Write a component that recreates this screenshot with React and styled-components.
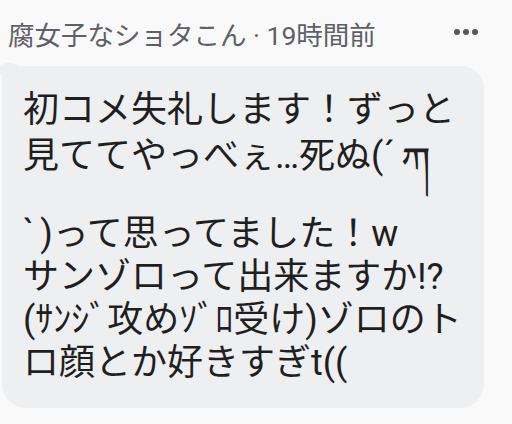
import React from "react";
import styled, { createGlobalStyle } from "styled-components";

const GlobalStyle = createGlobalStyle`
  html, body {
    margin: 0;
    padding: 0;
    background: #f9f9f9;
  }
  body {
    font-family: Roboto, "Noto Sans CJK JP", sans-serif;
  }
`;

const Page = styled.div`
  width: 512px;
  height: 424px;
  overflow: hidden;
  background: #f9f9f9;
`;

const Header = styled.div`
  display: flex;
  align-items: center;
  justify-content: space-between;
  height: 66px;
  padding: 0 34px 0 8px;
  box-sizing: border-box;
`;

const Meta = styled.div`
  font-size: 26.5px;
  color: #5e6066;
  white-space: nowrap;
`;

const MoreButton = styled.div`
  display: flex;
  gap: 3px;
  padding-bottom: 2px;
`;

const Dot = styled.span`
  width: 6px;
  height: 6px;
  border-radius: 50%;
  background: #55575d;
`;

const Bubble = styled.div`
  position: relative;
  margin-left: 2px;
  width: 482px;
  height: 342px;
  box-sizing: border-box;
  padding: 23px 10px 0 21px;
  background: #eeeff1;
  border-radius: 6px 22px 24px 24px;

  &::before {
    content: "";
    position: absolute;
    left: -4px;
    top: -3px;
    width: 22px;
    height: 12px;
    background: #eeeff1;
    border-radius: 50% 50% 0 0;
  }
`;

const Line = styled.div`
  position: relative;
  font-size: 36px;
  line-height: 43px;
  color: #1f1f21;
  white-space: nowrap;
  margin-bottom: ${(p) => (p.tall ? "35px" : "0")};
`;

const Tibetan = styled.span`
  position: relative;
  top: 9px;
  margin-left: 6px;
  font-size: 42px;
  font-family: "Noto Sans Tibetan", "DejaVu Sans", sans-serif;
`;

const Grave = styled.span`
  margin-right: 6px;
`;

export default function App() {
  return (
    <Page>
      <GlobalStyle />
      <Header>
        <Meta>腐女子なショタこん · 19時間前</Meta>
        <MoreButton>
          <Dot />
          <Dot />
          <Dot />
        </MoreButton>
      </Header>
      <Bubble>
        <Line>初コメ失礼します！ずっと</Line>
        <Line tall>
          見ててやっべぇ…死ぬ(´<Tibetan>ཀ</Tibetan>
        </Line>
        <Line>
          <Grave>`</Grave>)って思ってました！w
        </Line>
        <Line>サンゾロって出来ますか!?</Line>
        <Line>(ｻﾝｼﾞ攻めｿﾞﾛ受け)ゾロのト</Line>
        <Line>ロ顔とか好きすぎt((</Line>
      </Bubble>
    </Page>
  );
}
